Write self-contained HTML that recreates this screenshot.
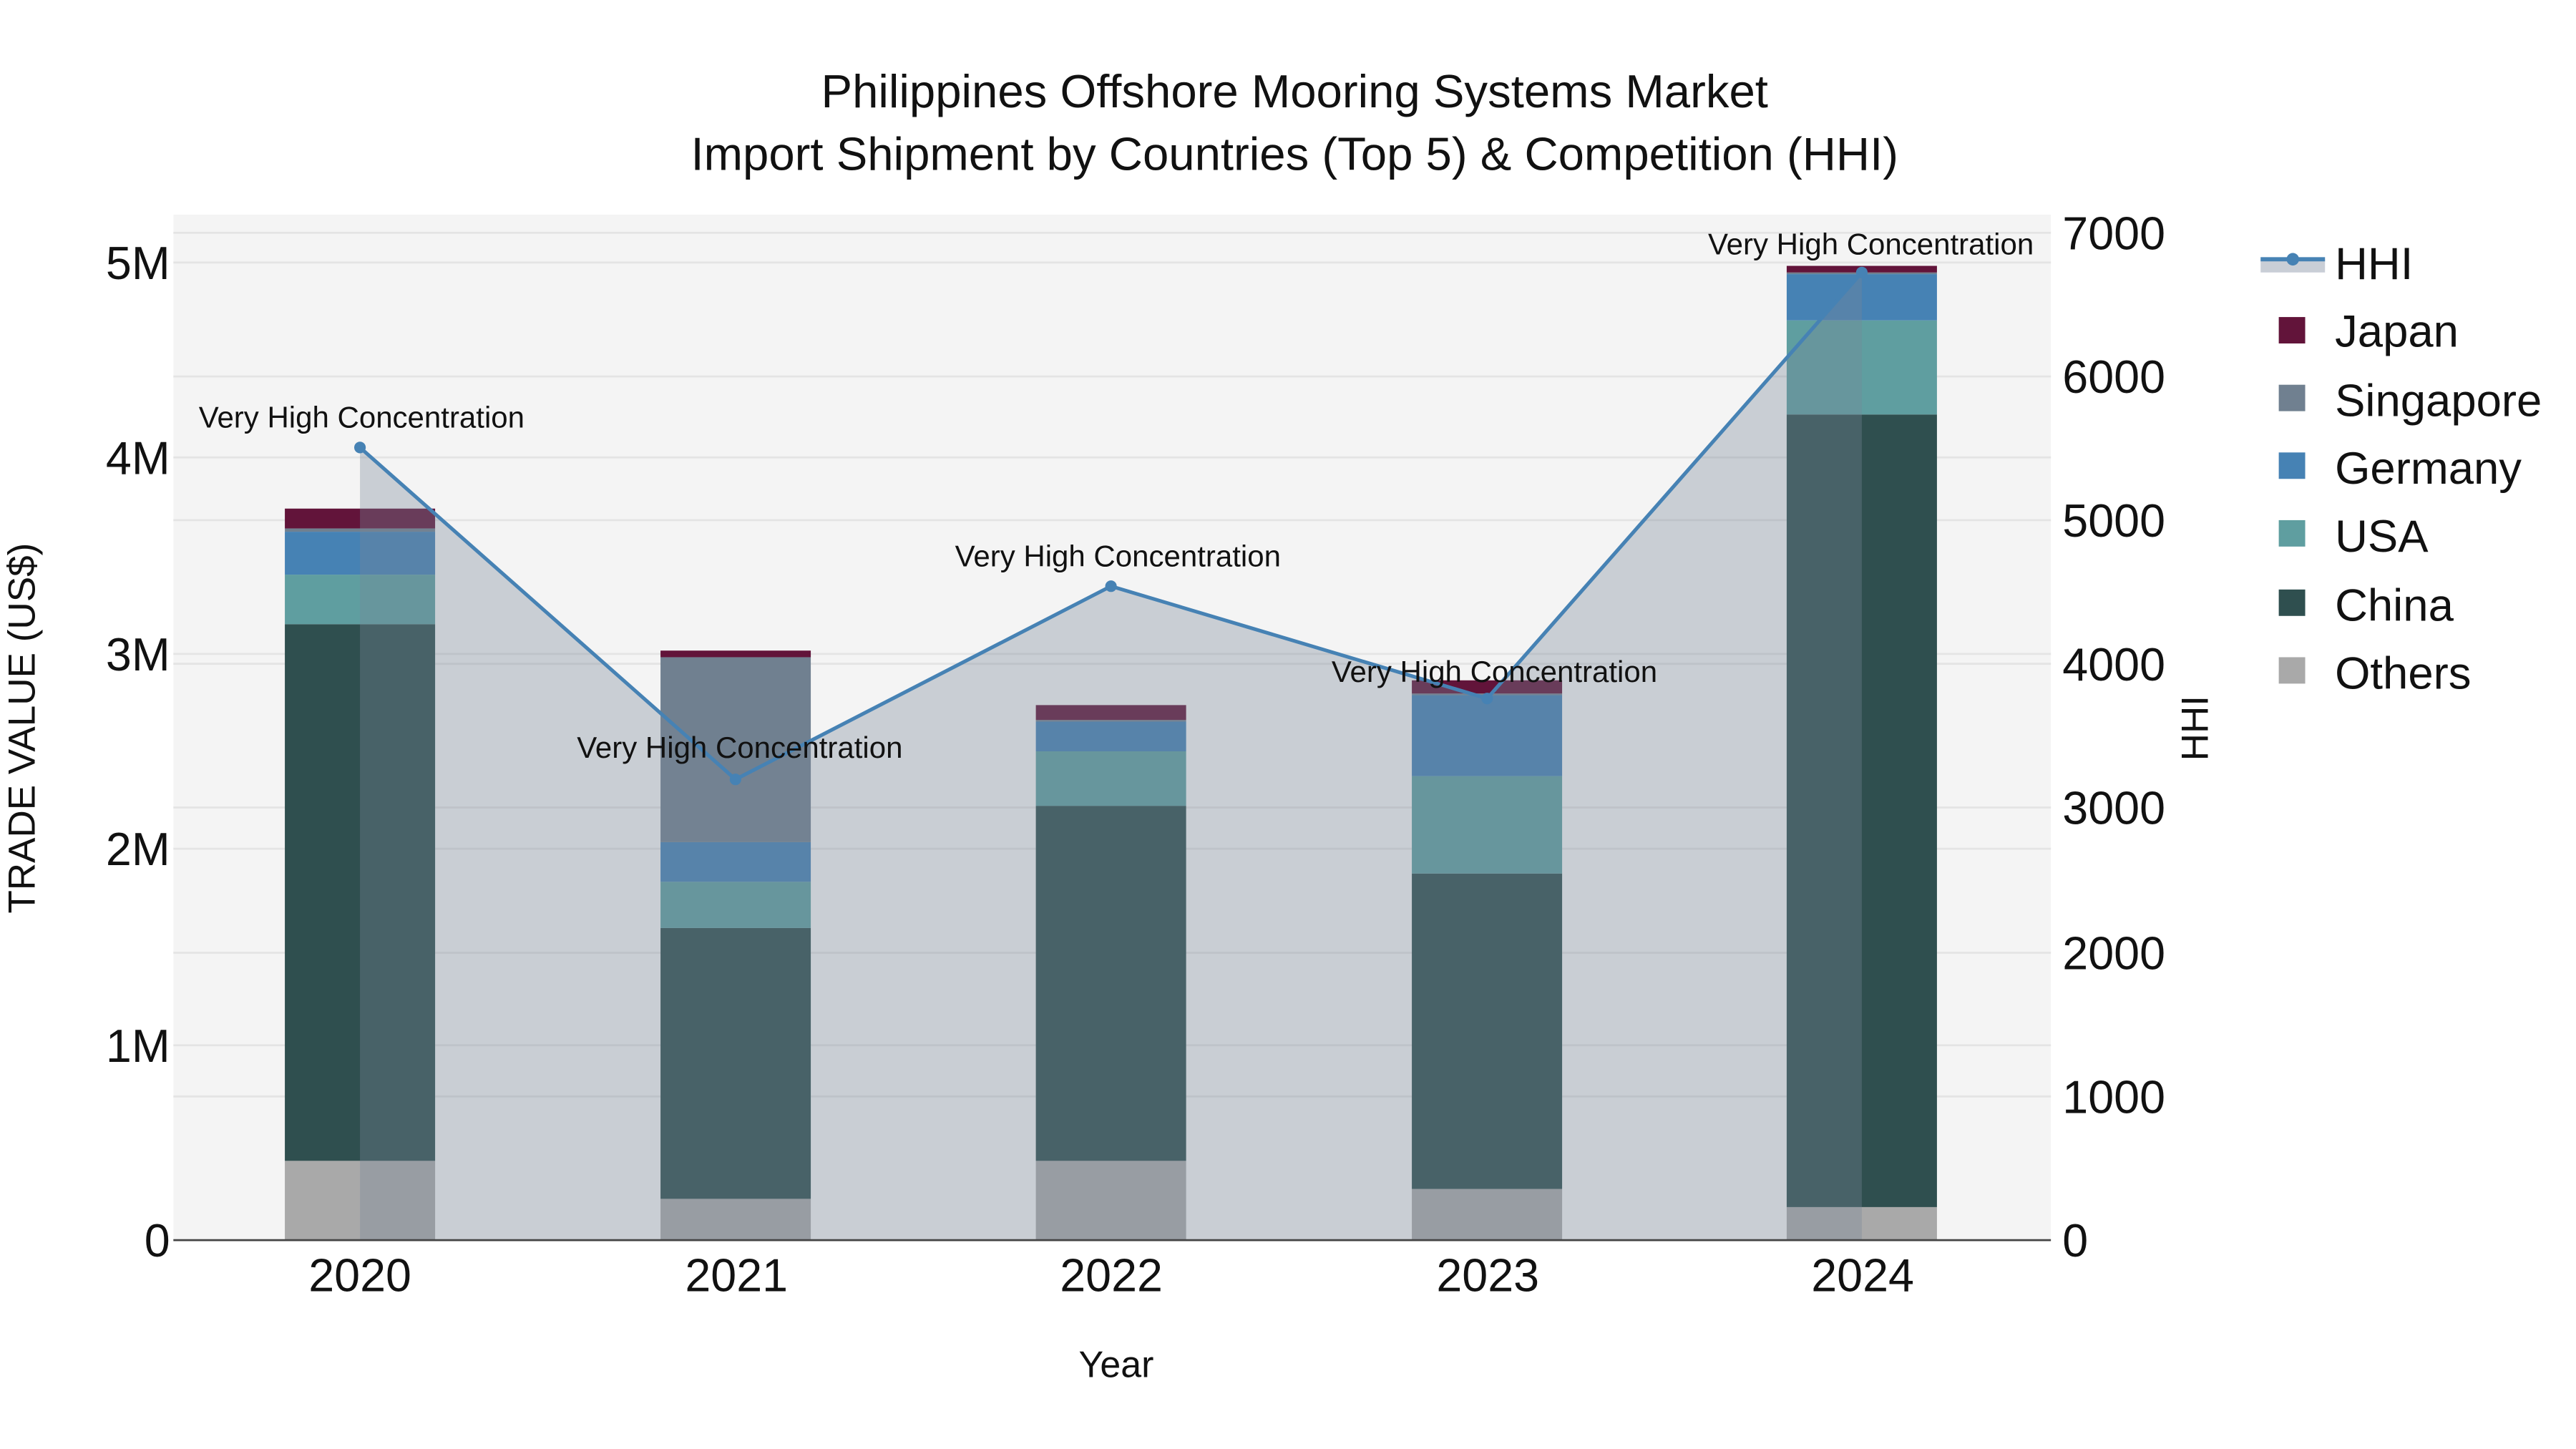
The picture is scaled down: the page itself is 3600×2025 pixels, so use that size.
<!DOCTYPE html>
<html><head><meta charset="utf-8"><style>
html,body{margin:0;padding:0;background:#fff;}
svg{display:block;}
text{font-family:"Liberation Sans",Arial,sans-serif;fill:#111;}
</style></head><body>
<svg width="3600" height="2025" viewBox="0 0 1560 877.5" xmlns="http://www.w3.org/2000/svg">
<rect x="0" y="0" width="1560" height="877.5" fill="#fff"/>
<rect x="105" y="130" width="1137" height="621" fill="#f4f4f4"/>
<g stroke="#e4e4e4" stroke-width="1.2">
<line x1="105" x2="1242" y1="159" y2="159"/><line x1="105" x2="1242" y1="277" y2="277"/>
<line x1="105" x2="1242" y1="396" y2="396"/><line x1="105" x2="1242" y1="514" y2="514"/>
<line x1="105" x2="1242" y1="633" y2="633"/>
<line x1="105" x2="1242" y1="141" y2="141"/><line x1="105" x2="1242" y1="228" y2="228"/>
<line x1="105" x2="1242" y1="315" y2="315"/><line x1="105" x2="1242" y1="402" y2="402"/>
<line x1="105" x2="1242" y1="489" y2="489"/><line x1="105" x2="1242" y1="577" y2="577"/>
<line x1="105" x2="1242" y1="664" y2="664"/>
</g>
<g>
<rect x="172.5" y="703" width="91" height="48" fill="#a9a9a9"/>
<rect x="172.5" y="378" width="91" height="325" fill="#2f4f4f"/>
<rect x="172.5" y="348" width="91" height="30" fill="#5f9ea0"/>
<rect x="172.5" y="322" width="91" height="26" fill="#4682b4"/>
<rect x="172.5" y="320" width="91" height="2" fill="#708090"/>
<rect x="172.5" y="308" width="91" height="12" fill="#62143a"/>
<rect x="400" y="726" width="91" height="25" fill="#a9a9a9"/>
<rect x="400" y="562" width="91" height="164" fill="#2f4f4f"/>
<rect x="400" y="534" width="91" height="28" fill="#5f9ea0"/>
<rect x="400" y="510" width="91" height="24" fill="#4682b4"/>
<rect x="400" y="398" width="91" height="112" fill="#708090"/>
<rect x="400" y="394" width="91" height="4" fill="#62143a"/>
<rect x="627.3" y="703" width="91" height="48" fill="#a9a9a9"/>
<rect x="627.3" y="488" width="91" height="215" fill="#2f4f4f"/>
<rect x="627.3" y="455" width="91" height="33" fill="#5f9ea0"/>
<rect x="627.3" y="437" width="91" height="18" fill="#4682b4"/>
<rect x="627.3" y="436" width="91" height="1" fill="#708090"/>
<rect x="627.3" y="427" width="91" height="9" fill="#62143a"/>
<rect x="855" y="720" width="91" height="31" fill="#a9a9a9"/>
<rect x="855" y="529" width="91" height="191" fill="#2f4f4f"/>
<rect x="855" y="470" width="91" height="59" fill="#5f9ea0"/>
<rect x="855" y="421" width="91" height="49" fill="#4682b4"/>
<rect x="855" y="420" width="91" height="1" fill="#708090"/>
<rect x="855" y="412" width="91" height="8" fill="#62143a"/>
<rect x="1082" y="731" width="91" height="20" fill="#a9a9a9"/>
<rect x="1082" y="251" width="91" height="480" fill="#2f4f4f"/>
<rect x="1082" y="194" width="91" height="57" fill="#5f9ea0"/>
<rect x="1082" y="166" width="91" height="28" fill="#4682b4"/>
<rect x="1082" y="165" width="91" height="1" fill="#708090"/>
<rect x="1082" y="161" width="91" height="4" fill="#62143a"/>
</g>
<polygon points="218,271 445.4,472 672.8,355 900.6,423 1127.5,165 1127.5,751 218,751" fill="rgba(119,136,153,0.35)"/>
<polyline points="218,271 445.4,472 672.8,355 900.6,423 1127.5,165" fill="none" stroke="#4682b4" stroke-width="2.2"/>
<g fill="#4682b4"><circle cx="218" cy="271" r="3.5"/><circle cx="445.4" cy="472" r="3.5"/><circle cx="672.8" cy="355" r="3.5"/><circle cx="900.6" cy="423" r="3.5"/><circle cx="1127.5" cy="165" r="3.5"/></g>
<line x1="105" x2="1242" y1="751" y2="751" stroke="#444" stroke-width="1.2"/>
<g font-size="18.2" text-anchor="middle">
<text x="219" y="259">Very High Concentration</text>
<text x="448" y="459">Very High Concentration</text>
<text x="677" y="343">Very High Concentration</text>
<text x="905" y="413">Very High Concentration</text>
<text x="1133" y="154">Very High Concentration</text>
</g>
<g font-size="28" text-anchor="end">
<text x="103" y="761">0</text><text x="103" y="643">1M</text><text x="103" y="524">2M</text>
<text x="103" y="406">3M</text><text x="103" y="287">4M</text><text x="103" y="169">5M</text>
</g>
<g font-size="28" text-anchor="start">
<text x="1249" y="761">0</text><text x="1249" y="674">1000</text><text x="1249" y="587">2000</text>
<text x="1249" y="499">3000</text><text x="1249" y="412">4000</text><text x="1249" y="325">5000</text>
<text x="1249" y="238">6000</text><text x="1249" y="151">7000</text>
</g>
<g font-size="28" text-anchor="middle">
<text x="218" y="782">2020</text><text x="446" y="782">2021</text><text x="673" y="782">2022</text>
<text x="901" y="782">2023</text><text x="1128" y="782">2024</text>
</g>
<text x="676" y="834" font-size="22.5" text-anchor="middle">Year</text>
<text transform="translate(21,441) rotate(-90)" font-size="23" text-anchor="middle">TRADE VALUE (US$)</text>
<text transform="translate(1337,441) rotate(-90)" font-size="23" text-anchor="middle">HHI</text>
<g font-size="28.3" text-anchor="middle">
<text x="784" y="65">Philippines Offshore Mooring Systems Market</text>
<text x="784" y="103">Import Shipment by Countries (Top 5) &amp; Competition (HHI)</text>
</g>
<rect x="1369" y="157" width="39" height="8" fill="#c9ced6"/>
<line x1="1369" x2="1408" y1="157" y2="157" stroke="#4682b4" stroke-width="2.5"/>
<circle cx="1388.5" cy="157" r="3.8" fill="#4682b4"/>
<rect x="1380" y="192" width="16" height="16" fill="#62143a"/>
<rect x="1380" y="233" width="16" height="16" fill="#708090"/>
<rect x="1380" y="274" width="16" height="16" fill="#4682b4"/>
<rect x="1380" y="315" width="16" height="16" fill="#5f9ea0"/>
<rect x="1380" y="357" width="16" height="16" fill="#2f4f4f"/>
<rect x="1380" y="398" width="16" height="16" fill="#a9a9a9"/>
<g font-size="27.5">
<text x="1414" y="169">HHI</text>
<text x="1414" y="210">Japan</text>
<text x="1414" y="252">Singapore</text>
<text x="1414" y="293">Germany</text>
<text x="1414" y="334">USA</text>
<text x="1414" y="376">China</text>
<text x="1414" y="417">Others</text>
</g>
</svg>
</body></html>
